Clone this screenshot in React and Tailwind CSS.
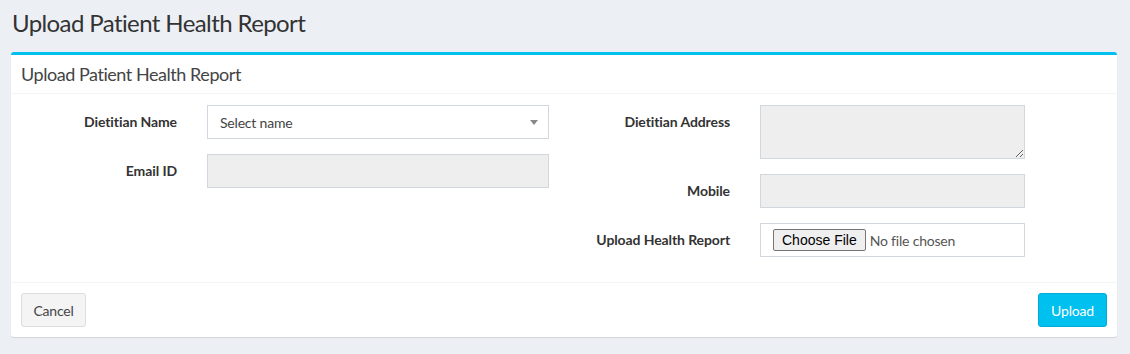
function Label({ children, w }) {
  return (
    <div className={`${w} shrink-0 text-right pt-[7px] text-[14px] leading-[20px] font-bold text-[#333] tracking-[-0.1px]`}>
      {children}
    </div>
  );
}

export default function App() {
  return (
    <div
      className="min-h-[354px] bg-[#ecf0f5] pt-[10px] pb-[16px]"
      style={{ fontFamily: "Lato, 'Liberation Sans', sans-serif" }}
    >
      <h1 className="pl-[12px] text-[24px] leading-[26px] text-[#333] tracking-[-0.6px] font-normal">
        Upload Patient Health Report
      </h1>

      <div className="ml-[11px] mt-[16px] w-[1106px] bg-white border-t-[3px] border-[#00c0ef] rounded-[3px] shadow-[0_1px_1px_rgba(0,0,0,0.12)]">
        <div className="h-[39px] px-[10px] flex items-center border-b border-[#f4f4f4]">
          <h3 className="text-[18px] leading-[20px] text-[#444] tracking-[-0.45px]">Upload Patient Health Report</h3>
        </div>

        <div className="px-[10px] pt-[11px] pb-[10px] flex">
          {/* left column */}
          <div className="w-[543px] flex flex-col">
            <div className="flex mb-[15px]">
              <Label w="w-[156px]">Dietitian Name</Label>
              <div className="ml-[30px] w-[342px] h-[34px] border border-[#d2d6de] bg-white flex items-center pl-[12px] pr-[10px] text-[14px] text-[#444] tracking-[-0.2px]">
                <span className="flex-1">Select name</span>
                <svg width="8" height="5" viewBox="0 0 8 5">
                  <path d="M0 0 L8 0 L4 5 Z" fill="#888" />
                </svg>
              </div>
            </div>
            <div className="flex mb-[15px]">
              <Label w="w-[156px]">Email ID</Label>
              <div className="ml-[30px] w-[342px] h-[34px] border border-[#d2d6de] bg-[#eeeeee]" />
            </div>
          </div>

          {/* right column */}
          <div className="w-[543px] flex flex-col">
            <div className="flex mb-[15px]">
              <Label w="w-[166px]">Dietitian Address</Label>
              <textarea
                readOnly
                className="ml-[30px] w-[265px] h-[54px] border border-[#d2d6de] bg-[#eeeeee] outline-none resize"
              />
            </div>
            <div className="flex mb-[15px]">
              <Label w="w-[166px]">Mobile</Label>
              <div className="ml-[30px] w-[265px] h-[34px] border border-[#d2d6de] bg-[#eeeeee]" />
            </div>
            <div className="flex mb-[15px]">
              <Label w="w-[166px]">Upload Health Report</Label>
              <div className="ml-[30px] w-[265px] h-[34px] border border-[#d2d6de] bg-white flex items-center pl-[12px]">
                <span
                  className="h-[22px] px-[8px] flex items-center border border-[#767676] rounded-[2px] bg-[#efefef] text-[14px] text-black"
                  style={{ fontFamily: "'Liberation Sans', Arial, sans-serif" }}
                >
                  Choose File
                </span>
                <span className="ml-[4px] text-[14px] text-[#555] tracking-[-0.2px]">No file chosen</span>
              </div>
            </div>
          </div>
        </div>

        <div className="border-t border-[#f4f4f4] p-[10px] flex justify-between">
          <button className="h-[34px] w-[65px] bg-[#f4f4f4] border border-[#ddd] rounded-[3px] text-[14px] text-[#444] tracking-[-0.2px]">
            Cancel
          </button>
          <button className="h-[34px] w-[69px] bg-[#00c0ef] border border-[#00acd6] rounded-[3px] text-[14px] text-white tracking-[-0.2px]">
            Upload
          </button>
        </div>
      </div>
    </div>
  );
}
